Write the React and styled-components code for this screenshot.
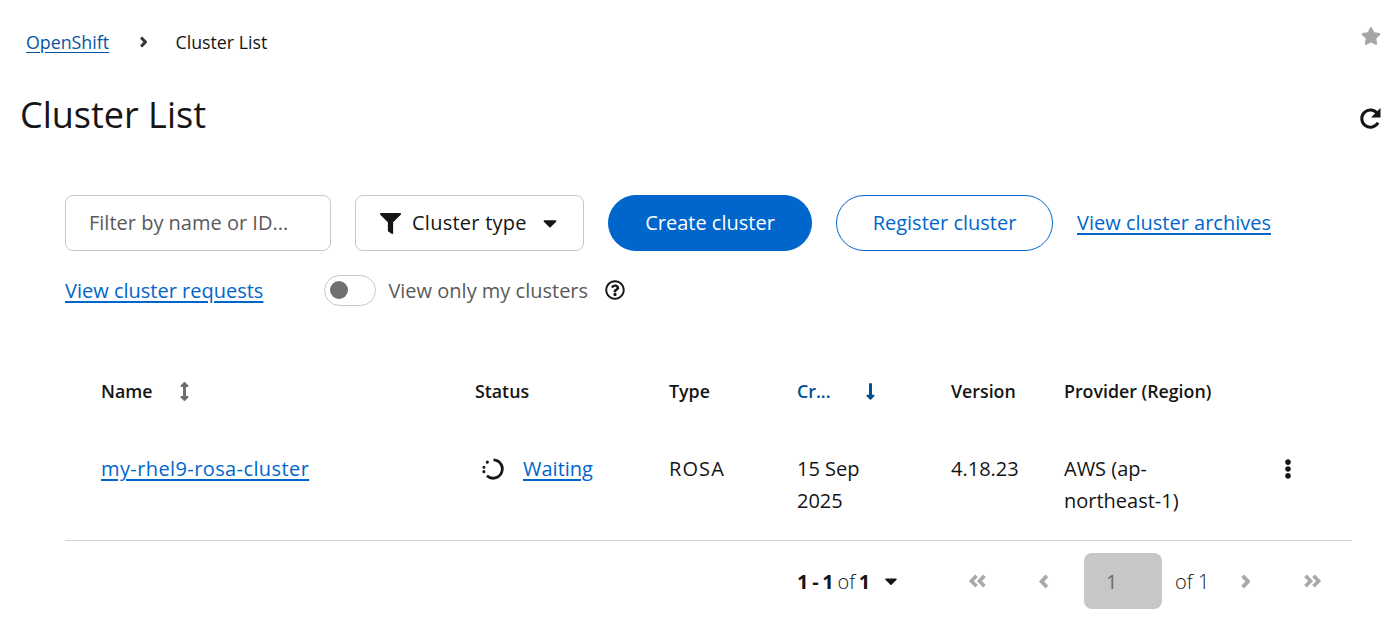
import React from "react";
import styled, { createGlobalStyle } from "styled-components";
import { FaStar, FaFilter, FaCaretDown, FaEllipsisV, FaArrowsAltV, FaLongArrowAltDown, FaRegQuestionCircle } from "react-icons/fa";

const Global = createGlobalStyle`
  html, body { margin: 0; padding: 0; background: #fff; }
  body { font-family: "Open Sans", "Noto Sans", sans-serif; font-size: 20px; color: #151515; }
`;

const Page = styled.div`
  width: 1391px;
  height: 634px;
  overflow: hidden;
  box-sizing: border-box;
  padding-top: 29px;
`;
const TopRow = styled.div`
  display: flex;
  justify-content: space-between;
  padding: 0 10px 0 26px;
  height: 26px;
  align-items: center;
`;
const Crumbs = styled.nav`
  display: flex;
  align-items: center;
  font-size: 17.8px;
  line-height: 26px;
  padding-bottom: 1px;
`;
const CrumbLink = styled.a`
  color: #0554a5;
  text-decoration: underline;
  text-underline-offset: 3px;
`;
const CrumbSep = styled.span`
  display: inline-flex;
  margin: 0 28px 0 30px;
`;
const StarButton = styled.span`
  display: inline-flex;
  font-size: 20px;
  color: #a6a6a6;
  margin-top: -12px;
`;
const TitleRow = styled.div`
  display: flex;
  justify-content: space-between;
  align-items: center;
  padding: 0 9px 0 20px;
  margin-top: 34px;
  height: 52px;
`;
const Title = styled.h1`
  margin: 0;
  font-size: 36px;
  font-weight: 400;
  line-height: 52px;
`;
const RedoWrap = styled.span`
  display: inline-flex;
  margin-top: 6px;
`;
const Content = styled.div`
  padding: 0 39px 0 65px;
`;
const Toolbar = styled.div`
  display: flex;
  align-items: center;
  margin-top: 54px;
  height: 56px;
  gap: 24px;
`;
const Field = styled.div`
  box-sizing: border-box;
  width: 266px;
  height: 56px;
  border: 1px solid #c7c7c7;
  border-radius: 8px;
  display: flex;
  align-items: center;
  padding: 0 0 2px 23px;
  color: #5a5a5a;
`;
const Dropdown = styled.div`
  box-sizing: border-box;
  width: 229px;
  height: 56px;
  border: 1px solid #c7c7c7;
  border-radius: 8px;
  display: flex;
  align-items: center;
  padding-left: 24px;
  gap: 11px;
`;
const DropLabel = styled.span`
  letter-spacing: 0.25px;
  margin-right: 1px;
  padding-bottom: 2px;
`;
const IconWrap = styled.span`
  display: inline-flex;
  font-size: ${(p) => p.$size || 20}px;
  color: ${(p) => p.$color || "#151515"};
`;
const PillButton = styled.button`
  box-sizing: border-box;
  height: 56px;
  width: ${(p) => p.$width}px;
  border-radius: 28px;
  font: inherit;
  padding: 0 0 2px;
  background: ${(p) => (p.$primary ? "#06c" : "#fff")};
  color: ${(p) => (p.$primary ? "#fff" : "#06c")};
  border: 1px solid #06c;
`;
const TextLink = styled.a`
  color: #06c;
  text-decoration: underline;
  text-underline-offset: 3px;
  letter-spacing: ${(p) => p.$track || 0}px;
`;
const ArchiveLink = styled(TextLink)`
  margin-bottom: 2px;
`;
const SecondRow = styled.div`
  display: flex;
  align-items: center;
  height: 32px;
  margin-top: 23px;
`;
const Toggle = styled.span`
  box-sizing: border-box;
  width: 52px;
  height: 31px;
  margin-left: 61px;
  border: 1px solid #c7c7c7;
  border-radius: 16px;
  display: flex;
  align-items: center;
  padding-left: 5px;
`;
const Knob = styled.span`
  width: 18px;
  height: 18px;
  border-radius: 50%;
  background: #707070;
`;
const ToggleLabel = styled.span`
  color: #5a5a5a;
  margin: 0 17px 0 12px;
`;
const Row = styled.div`
  display: grid;
  grid-template-columns: 410px 194px 128px 154px 113px 214px 1fr;
  align-items: start;
  box-sizing: border-box;
  height: ${(p) => p.$height}px;
  padding-top: ${(p) => p.$top}px;
  line-height: 32px;
  border-bottom: ${(p) => (p.$line ? "1px solid #d2d2d2" : "0")};
`;
const HeadRow = styled(Row)`
  margin-top: 69px;
  font-size: 17.8px;
  font-weight: 600;
`;
const Cell = styled.div`
  padding-left: ${(p) => p.$pad || 0}px;
  display: flex;
  align-items: ${(p) => p.$align || "flex-start"};
  gap: ${(p) => p.$gap || 0}px;
  color: ${(p) => p.$color || "inherit"};
`;
const Wrap = styled.div`
  width: ${(p) => p.$w}px;
`;
const Wide = styled.span`
  letter-spacing: 1.1px;
`;
const KebabWrap = styled(IconWrap)`
  height: 32px;
  align-items: center;
`;
const Pager = styled.div`
  display: flex;
  align-items: center;
  height: 56px;
  margin-top: 12px;
  padding-left: 732px;
`;
const Count = styled.span`
  font-weight: 300;
  display: flex;
  align-items: center;
  width: 152px;
  word-spacing: -1.5px;
  b { font-weight: 700; }
`;
const CountCaret = styled(IconWrap)`
  margin-left: 11px;
`;
const PagerIcon = styled.span`
  display: inline-flex;
  justify-content: center;
  width: ${(p) => p.$w || 66}px;
`;
const PageInput = styled.span`
  box-sizing: border-box;
  width: 78px;
  height: 56px;
  background: #c7c7c7;
  border-radius: 8px;
  padding-left: 22px;
  display: flex;
  align-items: center;
  color: #6a6a6a;
`;
const OfText = styled.span`
  margin-left: 13px;
  width: 37px;
  font-weight: 300;
`;

const Chevron = ({ dir = "right", color = "#a9a9a9", size = 15, sw = 3.6 }) => (
  <svg width={size * 0.7} height={size} viewBox="0 0 10 14" fill="none" stroke={color} strokeWidth={sw} strokeLinejoin="miter">
    <path d={dir === "right" ? "M2.5 1.7 7.6 7l-5.1 5.3" : "M7.5 1.7 2.4 7l5.1 5.3"} />
  </svg>
);
const Double = ({ dir = "right" }) => (
  <svg width="19" height="14" viewBox="0 0 19 14" fill="none" stroke="#a9a9a9" strokeWidth="3.6">
    <path d={dir === "right" ? "M2.5 1.7 7.6 7l-5.1 5.3M10.5 1.7 15.6 7l-5.1 5.3" : "M8.5 1.7 3.4 7l5.1 5.3M16.5 1.7 11.4 7l5.1 5.3"} />
  </svg>
);
const Spinner = () => (
  <svg width="24" height="24" viewBox="0 0 24 24" fill="none" stroke="#151515" strokeWidth="2.8">
    <path d="M12.5 2.8a9.2 9.2 0 1 1-6.6 16" />
    <path d="M2.9 14.6v.1M2.9 10.2v.1M6.3 5.2l.1-.1" strokeLinecap="round" strokeWidth="3" />
  </svg>
);
const Redo = () => (
  <svg width="24" height="24" viewBox="0 0 24 24" fill="none">
    <path d="M19.5 7.8A8.6 8.6 0 1 0 20 16.6" stroke="#151515" strokeWidth="3" />
    <path d="M22.5 2v9.5h-9.5z" fill="#151515" />
  </svg>
);

export default function App() {
  return (
    <Page>
      <Global />
      <TopRow>
        <Crumbs>
          <CrumbLink>OpenShift</CrumbLink>
          <CrumbSep><Chevron color="#333" size={12} /></CrumbSep>
          <span>Cluster List</span>
        </Crumbs>
        <StarButton><FaStar /></StarButton>
      </TopRow>
      <TitleRow>
        <Title>Cluster List</Title>
        <RedoWrap><Redo /></RedoWrap>
      </TitleRow>
      <Content>
        <Toolbar>
          <Field>Filter by name or ID...</Field>
          <Dropdown>
            <IconWrap $size={21}><FaFilter /></IconWrap>
            <DropLabel>Cluster type</DropLabel>
            <IconWrap $size={22}><FaCaretDown /></IconWrap>
          </Dropdown>
          <PillButton $primary $width={204}>Create cluster</PillButton>
          <PillButton $width={217}>Register cluster</PillButton>
          <ArchiveLink>View cluster archives</ArchiveLink>
        </Toolbar>
        <SecondRow>
          <TextLink>View cluster requests</TextLink>
          <Toggle><Knob /></Toggle>
          <ToggleLabel>View only my clusters</ToggleLabel>
          <IconWrap $size={20}><FaRegQuestionCircle /></IconWrap>
        </SecondRow>
        <HeadRow $height={58} $top={0}>
          <Cell $pad={36} $gap={23} $align="center">Name <IconWrap $size={19} $color="#6a6e73"><FaArrowsAltV /></IconWrap></Cell>
          <Cell>Status</Cell>
          <Cell>Type</Cell>
          <Cell $gap={30} $align="center" $color="#004f8f">Cr... <IconWrap $size={19} $color="#004f8f"><FaLongArrowAltDown /></IconWrap></Cell>
          <Cell>Version</Cell>
          <Cell>Provider (Region)</Cell>
        </HeadRow>
        <Row $height={108} $top={20} $line>
          <Cell $pad={36}><TextLink $track={0.4}>my-rhel9-rosa-cluster</TextLink></Cell>
          <Cell $pad={6} $gap={18} $align="center"><Spinner /><TextLink>Waiting</TextLink></Cell>
          <Cell><Wide>ROSA</Wide></Cell>
          <Cell><Wrap $w={90}>15 Sep 2025</Wrap></Cell>
          <Cell>4.18.23</Cell>
          <Cell><Wrap $w={130}>AWS (ap-northeast-1)</Wrap></Cell>
          <Cell $align="center"><KebabWrap $size={20}><FaEllipsisV /></KebabWrap></Cell>
        </Row>
        <Pager>
          <Count><span><b>1 - 1</b> of <b>1</b></span><CountCaret $size={20}><FaCaretDown /></CountCaret></Count>
          <PagerIcon $w={56}><Double dir="left" /></PagerIcon>
          <PagerIcon $w={79}><Chevron dir="left" /></PagerIcon>
          <PageInput>1</PageInput>
          <OfText>of 1</OfText>
          <PagerIcon $w={66}><Chevron /></PagerIcon>
          <PagerIcon $w={68}><Double /></PagerIcon>
        </Pager>
      </Content>
    </Page>
  );
}
